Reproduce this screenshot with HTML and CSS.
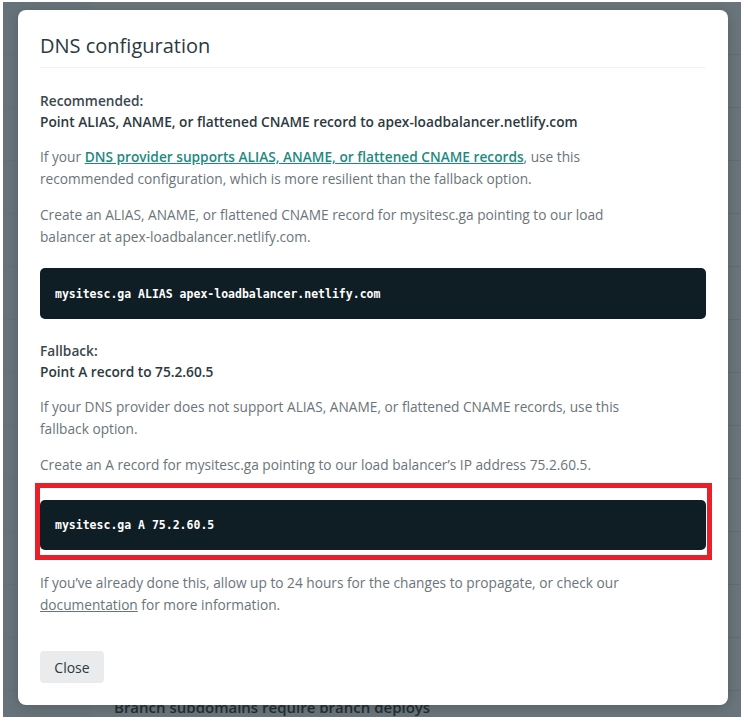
FILE: index.html
```html
<!DOCTYPE html>
<html lang="en">
<head>
<meta charset="utf-8">
<title>DNS configuration</title>
<link rel="stylesheet" href="styles.css">
</head>
<body>
<div class="screen">
  <div class="backdrop">
    <div class="backdrop-nav"></div>
    <div class="backdrop-main">
      <p class="backdrop-text">Branch subdomains require branch deploys</p>
    </div>
  </div>
  <div class="modal" role="dialog" aria-labelledby="dns-title">
    <h2 class="modal-title" id="dns-title">DNS configuration</h2>

    <p class="label">Recommended:<br><strong>Point ALIAS, ANAME, or flattened CNAME record to apex-loadbalancer.netlify.com</strong></p>
    <p class="text">If your <a class="link" href="#">DNS provider supports ALIAS, ANAME, or flattened CNAME records</a>, use this recommended configuration, which is more resilient than the fallback option.</p>
    <p class="text">Create an ALIAS, ANAME, or flattened CNAME record for mysitesc.ga pointing to our load balancer at apex-loadbalancer.netlify.com.</p>
    <pre class="code">mysitesc.ga ALIAS apex-loadbalancer.netlify.com</pre>

    <p class="label">Fallback:<br><strong>Point A record to 75.2.60.5</strong></p>
    <p class="text">If your DNS provider does not support ALIAS, ANAME, or flattened CNAME records, use this fallback option.</p>
    <p class="text text-tight">Create an A record for mysitesc.ga pointing to our load balancer’s IP address 75.2.60.5.</p>
    <div class="highlight">
      <pre class="code code-inner">mysitesc.ga A 75.2.60.5</pre>
    </div>

    <p class="text">If you’ve already done this, allow up to 24 hours for the changes to propagate, or check our <a class="doc-link" href="#">documentation</a> for more information.</p>

    <div class="actions">
      <button class="btn" type="button">Close</button>
    </div>
  </div>
</div>
</body>
</html>
```

FILE: styles.css
```css
* { box-sizing: border-box; }

html, body {
  margin: 0;
  padding: 0;
  background: #ffffff;
}

body {
  font-family: "Open Sans", "Noto Sans", "Liberation Sans", sans-serif;
  width: 744px;
  height: 721px;
  overflow: hidden;
}

.screen {
  position: relative;
  margin: 2px 3px 0 3px;
  height: 715px;
  background: #69757a;
  overflow: hidden;
  padding: 8px 13px 0 15px;
}

.backdrop {
  position: absolute;
  inset: 0;
  display: flex;
  background:
    repeating-linear-gradient(180deg, transparent 0 52px, rgba(0,0,0,0.07) 52px 53px);
}

.backdrop-nav {
  width: 88px;
  background: #66727a;
  opacity: 0.6;
}

.backdrop-main {
  flex: 1;
  display: flex;
  flex-direction: column;
  justify-content: flex-end;
}

.backdrop-text {
  margin: 0 0 0 23px;
  font-size: 15px;
  font-weight: 600;
  color: #222d33;
  line-height: 20px;
}

.modal {
  position: relative;
  width: 710px;
  height: 695px;
  background: #ffffff;
  border-radius: 8px;
  padding: 22px 22px 22px 22px;
  box-shadow: 0 2px 12px rgba(0,0,0,0.18);
  color: #6b7479;
}

.modal-title {
  margin: 0;
  font-size: 20px;
  line-height: 28px;
  font-weight: 400;
  color: #2c3940;
  padding-bottom: 7px;
  border-bottom: 1px solid #f2f3f3;
  margin-bottom: 22px;
}

.label {
  margin: 0 0 14px;
  font-size: 13.7px;
  line-height: 21px;
  font-weight: 600;
  color: #3b474d;
}

.label strong {
  font-weight: 600;
  color: #2c3940;
}

.text {
  margin: 0 0 14px;
  max-width: 600px;
  font-size: 13.7px;
  line-height: 22px;
  color: #6b7479;
}

.text-tight {
  margin-bottom: 7px;
}

.link {
  color: #1d8a81;
  font-weight: 600;
  text-decoration: underline;
}

.doc-link {
  color: #6b7479;
  text-decoration: underline;
}

.code {
  margin: 20px 0 21px;
  background: #0f1e25;
  color: #ffffff;
  border-radius: 5px;
  height: 51px;
  padding: 0 15px;
  display: flex;
  align-items: center;
  font-family: "DejaVu Sans Mono", "Liberation Mono", monospace;
  font-weight: 700;
  font-size: 11.5px;
}

.highlight {
  margin: 0 0 12px -5px;
  width: 677px;
  border: 5px solid #e8202a;
  padding: 12px 1px 5px 0;
}

.code-inner {
  margin: 0;
  height: 50px;
}

.actions {
  margin-top: 35px;
}

.btn {
  font-family: inherit;
  font-size: 14px;
  color: #2c3940;
  background: #e9ebed;
  border: 0;
  border-radius: 4px;
  width: 64px;
  height: 32px;
  padding: 0;
}
```
